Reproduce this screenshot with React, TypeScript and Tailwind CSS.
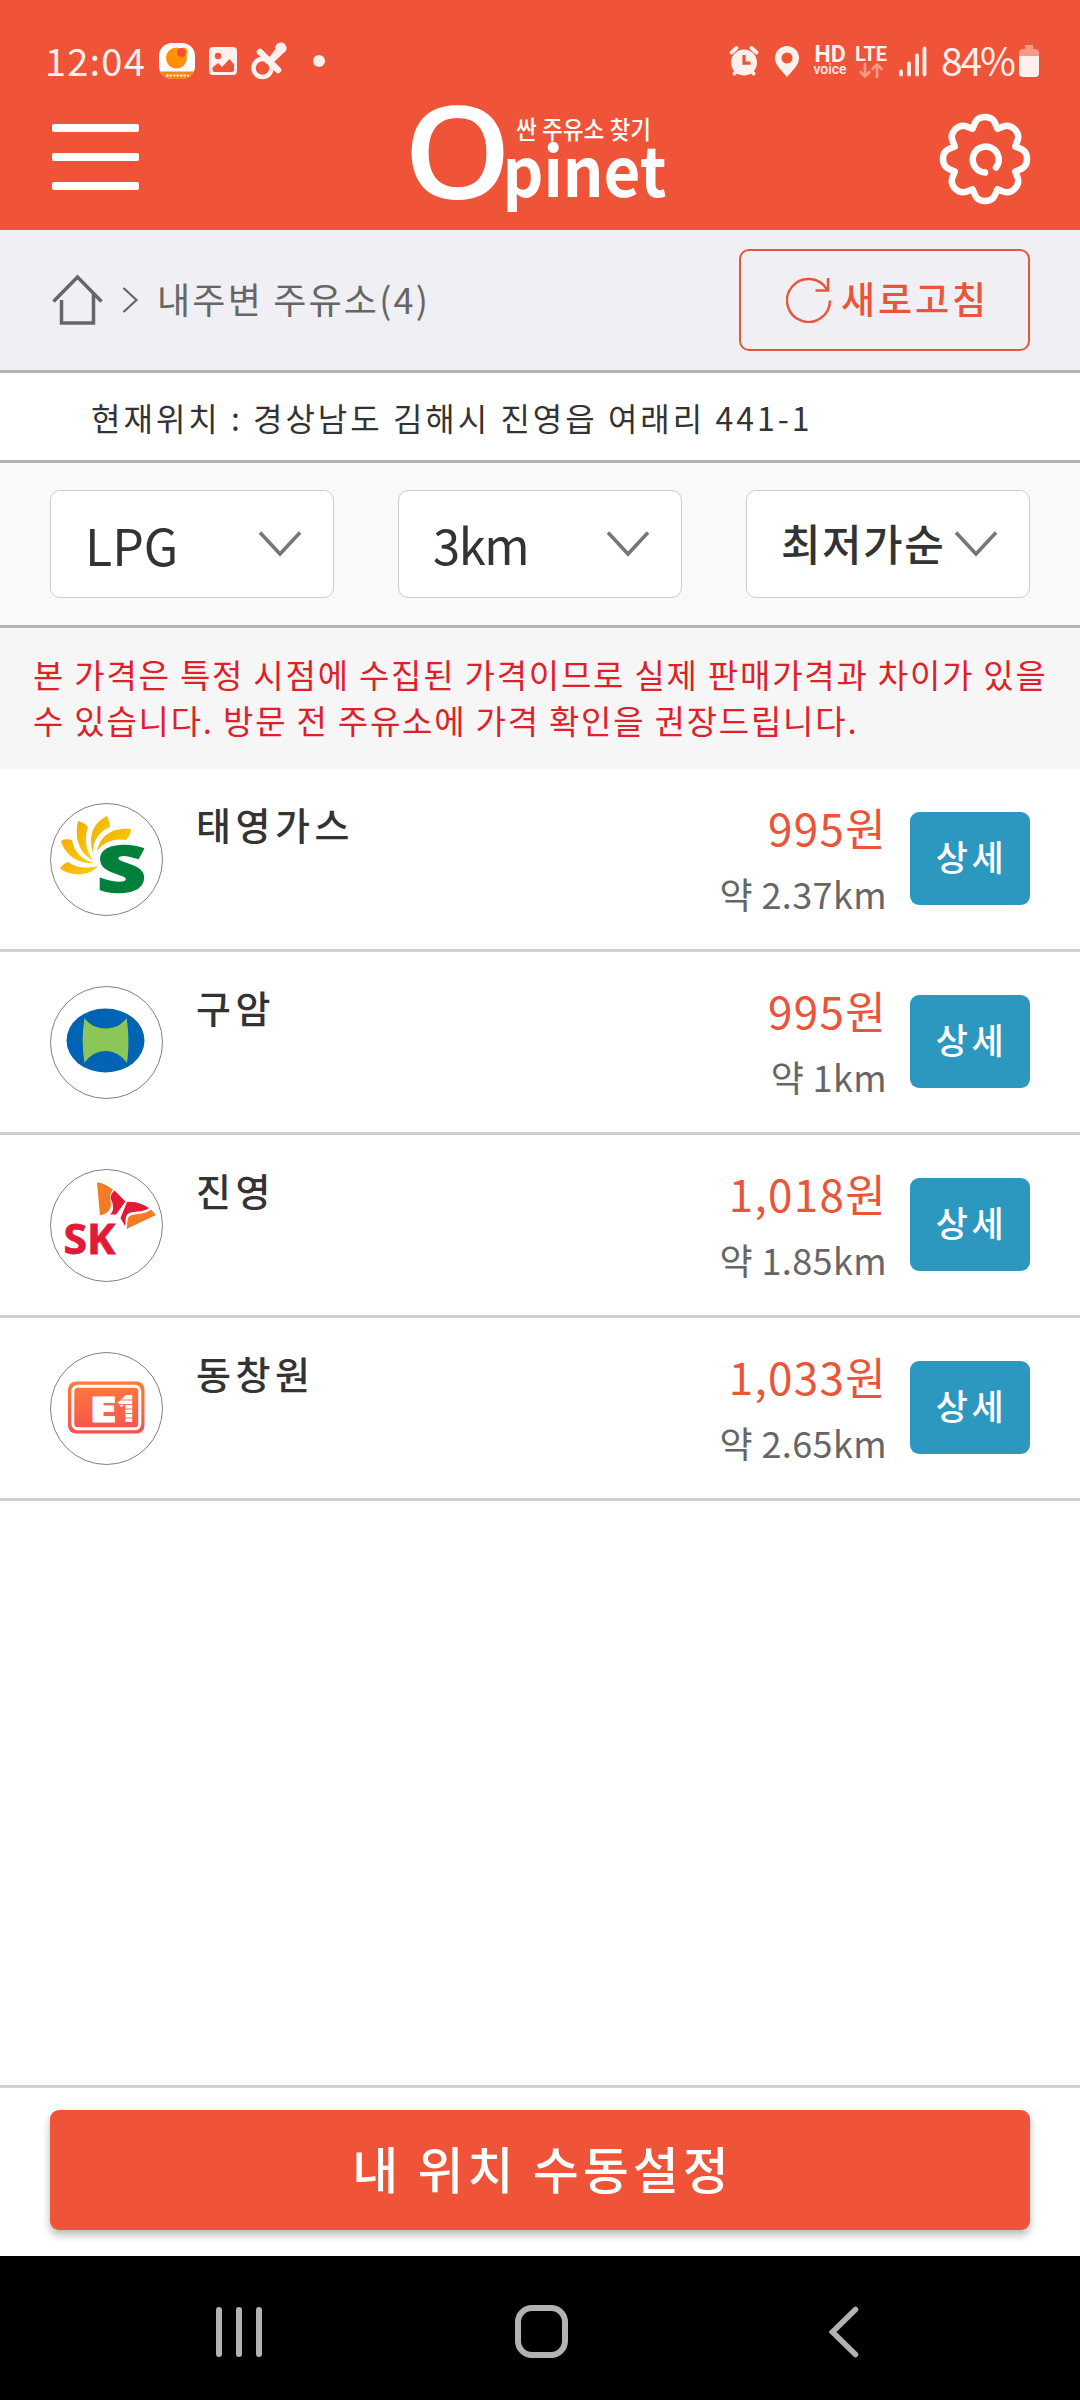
import React from "react";

const KR = "font-['Noto_Sans_CJK_KR','Noto_Sans',sans-serif]";

function StatusBar() {
  return (
    <div className="flex h-[100px] items-start justify-between pt-[41px] pr-[41px] pl-[45px] text-[#fef0ed]">
      <div className="flex h-10 items-center">
        <span className="-mt-[3px] w-[114px] text-[38px] leading-10 tracking-[1.200px] whitespace-nowrap">12:04</span>
        <svg width="36" height="36" viewBox="0 0 36 36">
          <defs>
            <clipPath id="squircle"><rect width="36" height="36" rx="13" /></clipPath>
            <linearGradient id="sun" x1="0" y1="1" x2="1" y2="0">
              <stop offset="0" stopColor="#ff8a00" />
              <stop offset="1" stopColor="#ff9a10" />
            </linearGradient>
          </defs>
          <g clipPath="url(#squircle)">
            <rect width="36" height="36" fill="#fff" />
            <rect y="28.500" width="36" height="8" fill="#f5870f" />
            <circle cx="24.500" cy="9" r="4.500" fill="#ffb400" />
            <circle cx="17.500" cy="15" r="10.500" fill="url(#sun)" />
            <circle cx="22.500" cy="9.500" r="4.500" fill="#fb4b3c" />
            <path d="M7 32.500h23" stroke="#fff" strokeWidth="2" strokeDasharray="2.500 1" opacity=".85" />
          </g>
        </svg>
        <svg className="ml-[14px]" width="28" height="28" viewBox="0 0 28 28">
          <rect width="28" height="28" rx="4" fill="currentColor" />
          <circle cx="9" cy="9" r="3.200" fill="#f05438" />
          <path d="M3.500 20.500l5.500-4.500 4 4 7.500-8 4.500 5.500v5.500a2 2 0 0 1-2 2h-17.500a2 2 0 0 1-2-2z" fill="#f05438" />
        </svg>
        <svg className="ml-[14px]" width="36" height="38" viewBox="0 0 36 38">
          <circle cx="11.500" cy="26" r="9" fill="none" stroke="currentColor" strokeWidth="4.500" />
          <path d="M9 10l18 18" stroke="currentColor" strokeWidth="6.500" strokeLinecap="round" />
          <path d="M14 21L24.500 7a5.500 5.500 0 1 1 8 4L20 23z" fill="currentColor" />
        </svg>
        <span className="ml-[26px] size-3 rounded-full bg-[#fef0ed]" />
      </div>
      <div className="flex h-10 items-center">
        <svg width="30" height="30" viewBox="0 0 30 30" fill="none" stroke="currentColor">
          <circle cx="15" cy="16.500" r="13" fill="currentColor" stroke="none" />
          <path d="M2.500 6.500l5-4.500M27.500 6.500l-5-4.500M5.500 27.500l3-3.500M24.500 27.500l-3-3.500" strokeWidth="3.800" strokeLinecap="round" />
          <path d="M15 9v8.200h6.500" stroke="#f05438" strokeWidth="3.200" />
        </svg>
        <svg className="ml-[16px]" width="24" height="31" viewBox="0 0 24 31">
          <path fill="currentColor" fillRule="evenodd" d="M12 0a12 12 0 0 1 12 12c0 7-6 12-12 19C6 24 0 19 0 12A12 12 0 0 1 12 0zm0 6.500a5.500 5.500 0 1 0 0 11 5.500 5.500 0 0 0 0-11z" />
        </svg>
        <div className="ml-[14px] flex w-[34px] flex-col items-center font-['Roboto',sans-serif]">
          <span className="text-[23px] leading-[17px] font-bold">HD</span>
          <span className="text-[14px] leading-[13px] font-medium">voice</span>
        </div>
        <div className="ml-[7px] flex w-[34px] flex-col items-center font-['Roboto',sans-serif]">
          <span className="text-[20px] leading-[18px] font-bold">LTE</span>
          <svg width="24" height="15" viewBox="0 0 24 15" fill="none" stroke="#f79a88" strokeWidth="2.600" strokeLinecap="round" strokeLinejoin="round">
            <path d="M6 1v12.500M1.500 9L6 13.500 10.500 9M18 14V1.500M13.500 6L18 1.500 22.500 6" />
          </svg>
        </div>
        <svg className="ml-[11px]" width="28" height="31" viewBox="0 0 28 31" stroke="currentColor" strokeWidth="3.800" strokeLinecap="round">
          <path d="M2 25.500v3M10 17.500v11M18 9.500v19M25.500 2.500v26" />
        </svg>
        <span className="-mt-[4px] ml-[14px] w-[78px] text-[39px] leading-10 tracking-[-2.200px] whitespace-nowrap">84%</span>
        <svg width="20" height="32" viewBox="0 0 20 32">
          <path d="M6 0h8v4h2a4 4 0 0 1 4 4v5H0V8a4 4 0 0 1 4-4h2z" fill="#f79a88" />
          <path d="M0 11h20v17a4 4 0 0 1-4 4H4a4 4 0 0 1-4-4z" fill="currentColor" />
        </svg>
      </div>
    </div>
  );
}

function Gear() {
  return (
    <svg width="92" height="92" viewBox="-46 -46 92 92" fill="none" stroke="#fff" strokeWidth="6.500" strokeLinecap="round" strokeLinejoin="round">
      {[0, 45, 90, 135, 180, 225, 270, 315].map((a) => (
        <path key={a} transform={`rotate(${a})`} d="M-12.500 -30.500C-10.500 -33 -10.500 -42 0 -42S10.500 -33 12.500 -30.500" />
      ))}
      <path d="M11 8.500A13 13 0 1 0 0 13.500" />
    </svg>
  );
}

function Logo() {
  return (
    <svg className="overflow-visible" width="260" height="112" viewBox="410 102 260 112" fill="#fff">
      <text x="404.500" y="198.500" fontSize="128" fontWeight="600" textLength="108" lengthAdjust="spacingAndGlyphs" fontFamily="'Open Sans','Noto Sans',sans-serif">O</text>
      <text x="503.500" y="196.500" fontSize="68" fontWeight="700" textLength="164" lengthAdjust="spacingAndGlyphs" fontFamily="'Noto Sans CJK KR',sans-serif">pinet</text>
      <text x="517" y="139" fontSize="25" fontWeight="500" textLength="135" lengthAdjust="spacingAndGlyphs" fontFamily="'Noto Sans CJK KR',sans-serif">싼 주유소 찾기</text>
    </svg>
  );
}

function Header() {
  return (
    <header className="h-[230px] bg-[#f05438]">
      <StatusBar />
      <div className="flex h-[130px] items-start justify-between pt-[2px] pr-[49px] pl-[52px]">
        <div className="mt-[22px] flex w-[87px] flex-col gap-[21px]">
          <span className="h-2 rounded-[2px] bg-white" />
          <span className="h-2 rounded-[2px] bg-white" />
          <span className="h-2 rounded-[2px] bg-white" />
        </div>
        <div className="-ml-px"><Logo /></div>
        <div className="mt-[11px]"><Gear /></div>
      </div>
    </header>
  );
}

function Breadcrumb() {
  return (
    <div className="flex h-[143px] items-center justify-between border-b-[3px] border-[#b1b3b7] bg-[#f0eff4] pr-[50px] pl-[52px]">
      <div className="flex items-center text-[#666]">
        <svg width="52" height="52" viewBox="0 0 52 52" fill="none" stroke="currentColor" strokeWidth="3.500">
          <path d="M1.500 27.500L25.500 3l24 24.500M9.500 26v23h32V20" />
        </svg>
        <svg className="ml-[18px]" width="17" height="26" viewBox="0 0 17 26" fill="none" stroke="currentColor" strokeWidth="2.200">
          <path d="M1.500 1l13 12-13 12" />
        </svg>
        <span className="-mt-[4px] ml-[18px] text-[36px] leading-10 tracking-[2.200px] whitespace-nowrap">내주변 주유소(4)</span>
      </div>
      <button className="flex h-[102px] w-[291px] items-center rounded-[10px] border-2 border-[#e0593f] pl-[45px] text-[#ea5539]">
        <svg width="46" height="46" viewBox="0 0 46 46" fill="none" stroke="currentColor" strokeWidth="2.400">
          <path d="M44 23.500A21.500 21.500 0 1 1 41 12.500M42 1v12.500H29.500" />
        </svg>
        <span className="-mt-[4px] ml-[9px] text-[37px] leading-10 font-medium tracking-[3px] whitespace-nowrap">새로고침</span>
      </button>
    </div>
  );
}

function Chevron() {
  return (
    <svg className="shrink-0" width="44" height="26" viewBox="0 0 44 26" fill="none" stroke="#777" strokeWidth="3.600">
      <path d="M2 1.500L22 23 42 1.500" />
    </svg>
  );
}

function Select({ children }: { children: React.ReactNode }) {
  return (
    <div className="flex h-[108px] w-[284px] items-center justify-between rounded-[10px] border border-[#ccc] bg-white pr-[31px] pl-[34px] whitespace-nowrap text-[#333]">
      {children}
      <div className="-ml-3"><Chevron /></div>
    </div>
  );
}

function SOilLogo() {
  return (
    <svg width="113" height="113" viewBox="0 0 113 113">
      <defs>
        <linearGradient id="petal" x1="0" y1="0" x2="1" y2="1">
          <stop offset="0" stopColor="#f3ab00" />
          <stop offset="1" stopColor="#fbd110" />
        </linearGradient>
      </defs>
      <g fill="url(#petal)">
        <path d="M10 66C12 62 15 60 18 59C26 65 36 66 48 63C40 72 26 75 10 66z" />
        <path d="M11 38C14 36 18 36 22 37C24 49 32 57 44 60C28 61 15 52 11 38z" />
        <path d="M28 18C32 19 36 21 38 24C34 36 36 48 43 57C30 51 24 36 28 18z" />
        <path d="M57 13C59 16 60 20 60 24C48 29 43 38 43 50C38 33 43 20 57 13z" />
        <path d="M81 26C81 30 79 34 76 37C64 35 54 39 47 48C50 33 62 24 81 26z" />
      </g>
      <text x="47" y="89" fontSize="63" fontWeight="800" textLength="49" lengthAdjust="spacingAndGlyphs" fill="#00803a" stroke="#00803a" strokeWidth="1.500" fontFamily="'Open Sans','Noto Sans',sans-serif">S</text>
    </svg>
  );
}

function OvalLogo() {
  return (
    <svg width="113" height="113" viewBox="0 0 113 113">
      <ellipse cx="55.500" cy="54.500" rx="39" ry="32" fill="#0063b4" />
      <path d="M34.500 32C44 46 67 46 76.500 32C79 46 79 64 77 77C66 61 45 61 34.500 77C32 62 32 47 34.500 32z" fill="#8dc658" />
    </svg>
  );
}

function SKLogo() {
  return (
    <svg width="113" height="113" viewBox="0 0 113 113">
      <text x="13.500" y="84.500" fontSize="42" fontWeight="700" textLength="52" lengthAdjust="spacingAndGlyphs" fill="#e31937" stroke="#e31937" strokeWidth=".8" fontFamily="'Open Sans','Noto Sans',sans-serif">SK</text>
      <path d="M47 13.500C53 14 59 17 63 21C58 27 61 30 61 36C61 41 57 45 50 46.500z" fill="#f47b25" />
      <path d="M64.500 21.500L75.500 32.500L66 45.500H60C66 40 62 33 60.500 29C60.500 26 62 24 64.500 21.500z" fill="#e31937" />
      <path d="M77 33C86 32 94 36 99 39C92 45 78 40 76 48C75 51 76 54 75 57L70.500 49z" fill="#e31937" />
      <path d="M101 40.500L106 46L76.500 60C78 55 76.500 50 79.500 47C86 44 94 46 101 40.500z" fill="#f47b25" />
    </svg>
  );
}

function E1Logo() {
  return (
    <svg width="113" height="113" viewBox="0 0 113 113">
      <defs>
        <linearGradient id="e1" x1="0" y1="0" x2="0" y2="1">
          <stop offset="0" stopColor="#ff7b3c" />
          <stop offset="1" stopColor="#f4524e" />
        </linearGradient>
      </defs>
      <rect x="18" y="29.500" width="76.500" height="52" rx="8" fill="url(#e1)" />
      <rect x="22.800" y="34.300" width="67" height="42.500" rx="5" fill="none" stroke="#fff" strokeWidth="3" />
      <text x="39.500" y="69.500" fontSize="36" fontWeight="800" textLength="27" lengthAdjust="spacingAndGlyphs" fill="#fff" stroke="#fff" fontFamily="'Open Sans',sans-serif">E</text>
      <text x="66.500" y="70" fontSize="37" fontWeight="800" textLength="20" lengthAdjust="spacingAndGlyphs" fill="#fff" fontFamily="'Open Sans',sans-serif">1</text>
      <path d="M67 48h17M67 52.500h17M67 57h17M67 61.500h17M67 66h17" stroke="#f9625a" strokeWidth=".9" />
    </svg>
  );
}

const stations = [
  { name: "태영가스", price: "995원", dist: "약 2.37km", logo: <SOilLogo /> },
  { name: "구암", price: "995원", dist: "약 1km", logo: <OvalLogo /> },
  { name: "진영", price: "1,018원", dist: "약 1.85km", logo: <SKLogo /> },
  { name: "동창원", price: "1,033원", dist: "약 2.65km", logo: <E1Logo /> },
];

export default function App() {
  return (
    <div className={`flex h-[2400px] w-[1080px] flex-col overflow-hidden bg-white ${KR}`}>
      <Header />
      <Breadcrumb />
      <div className="flex h-[90px] items-center border-b-[3px] border-[#b1b3b7] pl-[91px] text-[32px] tracking-[3px] whitespace-nowrap text-[#333]">
        현재위치 : 경상남도 김해시 진영읍 여래리 441-1
      </div>
      <div className="flex h-[165px] items-center justify-between border-b-[3px] border-[#b1b3b7] bg-[#f9f9f9] px-[50px]">
        <Select><span className="text-[50px] leading-[50px]">LPG</span></Select>
        <Select><span className="text-[49px] leading-[50px] tracking-[-1.500px]">3km</span></Select>
        <Select><span className="-mt-[5px] text-[43px] leading-[50px] font-medium tracking-[1.500px]">최저가순</span></Select>
      </div>
      <div className="h-[141px] bg-[#f6f6f6] pt-[24px] pl-[33px] text-[33px] leading-[45.500px] tracking-[1.780px] whitespace-nowrap text-[#de2129]">
        <p>본 가격은 특정 시점에 수집된 가격이므로 실제 판매가격과 차이가 있을</p>
        <p>수 있습니다. 방문 전 주유소에 가격 확인을 권장드립니다.</p>
      </div>
      <ul>
        {stations.map((s) => (
          <li key={s.name} className="flex h-[183px] items-start border-b-[3px] border-[#d0d0d0] px-[50px]">
            <div className="mt-[34px] size-[113px] rounded-full border border-[#808080] bg-white">
              <div className="-m-px">{s.logo}</div>
            </div>
            <span className="mt-[31px] ml-[33px] text-[38px] leading-[48px] font-medium tracking-[4.500px] text-[#333]">{s.name}</span>
            <div className="ml-auto flex flex-col items-end whitespace-nowrap">
              <span className="mt-[33px] text-[44px] leading-[50px] tracking-[1.300px] text-[#ea5539]">{s.price}</span>
              <span className="mt-[18px] text-[36px] leading-[46px] tracking-[.400px] text-[#666]">{s.dist}</span>
            </div>
            <button className="mt-[43px] ml-[23px] flex h-[93px] w-[120px] items-center justify-center rounded-[9px] bg-[#2d98bf] pb-[5px] pl-[3px] text-[35px] leading-10 font-medium tracking-[3.500px] text-white">
              상세
            </button>
          </li>
        ))}
      </ul>
      <div className="mt-auto h-[171px] border-t-[3px] border-[#d0d0d0] px-[50px] pt-[22px]">
        <button className="flex h-[120px] w-full items-center justify-center rounded-[9px] bg-[#f05438] pb-[7px] pl-[5px] text-[50px] leading-[60px] font-medium tracking-[4px] text-white shadow-[0_5px_8px_rgba(0,0,0,0.28)]">
          내 위치 수동설정
        </button>
      </div>
      <nav className="flex h-[144px] items-center justify-between bg-black pt-[9px] pr-[221px] pb-[2px] pl-[216px]">
        <div className="flex gap-[14px]">
          <span className="h-[50px] w-[6px] rounded-full bg-[#b2b2b2]" />
          <span className="h-[50px] w-[6px] rounded-full bg-[#b2b2b2]" />
          <span className="h-[50px] w-[6px] rounded-full bg-[#b2b2b2]" />
        </div>
        <span className="-ml-[9px] size-[53px] rounded-[17px] border-[6px] border-[#b2b2b2]" />
        <svg width="30" height="52" viewBox="0 0 30 52" fill="none" stroke="#b2b2b2" strokeWidth="5.500" strokeLinecap="round">
          <path d="M26.500 3.500L3.500 26l23 22.500" strokeLinejoin="miter" />
        </svg>
      </nav>
    </div>
  );
}
